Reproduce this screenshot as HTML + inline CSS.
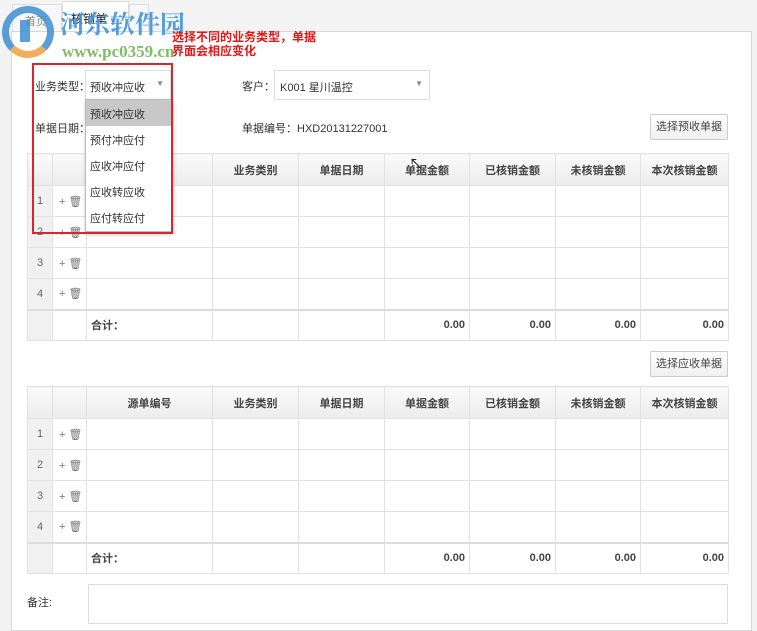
<!DOCTYPE html>
<html><head><meta charset="utf-8">
<style>
*{box-sizing:border-box;margin:0;padding:0}
body{width:757px;height:611px;overflow:hidden;background:#f2f2f2;font-family:"Liberation Sans","Noto Sans CJK SC",sans-serif;font-size:11px;color:#333;position:relative}
.abs{position:absolute}
.panel{left:11px;top:31px;width:741px;height:600px;background:#fff;border:1px solid #d8d8d8}
table{position:absolute;border-collapse:collapse;table-layout:fixed;left:27px;width:701px}
td,th{border:1px solid #e2e2e2;height:31px;padding:0 4px;font-size:11px}
th{background:linear-gradient(#fafafa,#ececec);font-weight:bold;color:#444;text-align:center;height:32px}
td.n{background:#f1f1f1;color:#666;text-align:center}
td.ic{color:#777;text-align:left;padding-left:6px;letter-spacing:3px}
tr.tot td{border-top:2px solid #ddd;font-weight:bold;text-align:right;color:#444}
tr.tot td.l{text-align:left}
.btn{border:1px solid #ccc;background:linear-gradient(#fff,#f0f0f0);width:78px;height:26px;left:650px;text-align:center;line-height:24px;color:#444;border-radius:2px}
.red{color:#e01818;font-weight:bold;font-size:12px}
</style></head><body>
<div class="abs" style="left:0;top:0;width:757px;height:31px;background:#f4f4f4"></div>
<div class="abs" style="left:12px;top:4px;width:50px;height:28px;border:1px solid #ddd;border-bottom:none;background:#f7f7f7;color:#888;padding:8px 0 0 12px">首页</div>
<div class="abs" style="left:62px;top:1px;width:67px;height:31px;border:1px solid #ddd;border-bottom:none;background:#fff;padding:8px 0 0 8px;font-size:12px;color:#222">核销单 <span style="color:#999;font-size:9px">▾</span></div>
<div class="abs" style="left:129px;top:4px;width:20px;height:28px;border:1px solid #ddd;border-bottom:none;background:#f7f7f7"></div>
<div class="abs panel"></div>
<!-- watermark logo -->
<div class="abs" style="left:2px;top:6px;width:52px;height:52px;border-radius:50%;border:7px solid #3f8fd2;border-bottom-color:#f0a040;opacity:.85"></div>
<div class="abs" style="left:20px;top:20px;width:10px;height:22px;background:#3f8fd2;opacity:.85"></div>
<div class="abs" style="left:60px;top:5px;font-size:25px;font-weight:bold;color:#3f94dc;font-family:'Liberation Serif','Noto Serif CJK SC',serif;opacity:.9">河东软件园</div>
<div class="abs" style="left:62px;top:42px;font-size:17px;font-weight:bold;color:#6ab04c;font-family:'Liberation Serif',serif;opacity:.85">www.pc0359.cn</div>
<div class="abs red" style="left:172px;top:30px;line-height:14px">选择不同的业务类型，单据<br>界面会相应变化</div>
<!-- form -->
<div class="abs" style="left:35px;top:78px">业务类型：</div>
<div class="abs" style="left:85px;top:70px;width:86px;height:30px;border:1px solid #ddd;padding:8px 0 0 4px">预收冲应收<span style="position:absolute;right:6px;top:8px;color:#888;font-size:8px">▼</span></div>
<div class="abs" style="left:35px;top:120px">单据日期：</div>
<div class="abs" style="left:242px;top:78px">客户：</div>
<div class="abs" style="left:274px;top:70px;width:156px;height:30px;border:1px solid #ddd;padding:8px 0 0 5px">K001 星川温控<span style="position:absolute;right:6px;top:8px;color:#888;font-size:8px">▼</span></div>
<div class="abs" style="left:242px;top:120px">单据编号：HXD20131227001</div>
<div class="abs btn" style="top:114px">选择预收单据</div>
<table style="top:153px">
<colgroup><col style="width:25px"><col style="width:34px"><col style="width:126px"><col style="width:86px"><col style="width:86px"><col style="width:85px"><col style="width:86px"><col style="width:85px"><col style="width:88px"></colgroup>
<tr><th></th><th></th><th>源单编号</th><th>业务类别</th><th>单据日期</th><th>单据金额</th><th>已核销金额</th><th>未核销金额</th><th>本次核销金额</th></tr>
<tr><td class="n">1</td><td class="ic">+🗑</td><td></td><td></td><td></td><td></td><td></td><td></td><td></td></tr>
<tr><td class="n">2</td><td class="ic">+🗑</td><td></td><td></td><td></td><td></td><td></td><td></td><td></td></tr>
<tr><td class="n">3</td><td class="ic">+🗑</td><td></td><td></td><td></td><td></td><td></td><td></td><td></td></tr>
<tr><td class="n">4</td><td class="ic">+🗑</td><td></td><td></td><td></td><td></td><td></td><td></td><td></td></tr>
<tr class="tot"><td class="n"></td><td></td><td class="l">合计：</td><td></td><td></td><td>0.00</td><td>0.00</td><td>0.00</td><td>0.00</td></tr>
</table>
<div class="abs btn" style="top:351px">选择应收单据</div>
<table style="top:386px">
<colgroup><col style="width:25px"><col style="width:34px"><col style="width:126px"><col style="width:86px"><col style="width:86px"><col style="width:85px"><col style="width:86px"><col style="width:85px"><col style="width:88px"></colgroup>
<tr><th></th><th></th><th>源单编号</th><th>业务类别</th><th>单据日期</th><th>单据金额</th><th>已核销金额</th><th>未核销金额</th><th>本次核销金额</th></tr>
<tr><td class="n">1</td><td class="ic">+🗑</td><td></td><td></td><td></td><td></td><td></td><td></td><td></td></tr>
<tr><td class="n">2</td><td class="ic">+🗑</td><td></td><td></td><td></td><td></td><td></td><td></td><td></td></tr>
<tr><td class="n">3</td><td class="ic">+🗑</td><td></td><td></td><td></td><td></td><td></td><td></td><td></td></tr>
<tr><td class="n">4</td><td class="ic">+🗑</td><td></td><td></td><td></td><td></td><td></td><td></td><td></td></tr>
<tr class="tot"><td class="n"></td><td></td><td class="l">合计：</td><td></td><td></td><td>0.00</td><td>0.00</td><td>0.00</td><td>0.00</td></tr>
</table>
<div class="abs" style="left:27px;top:594px">备注:</div>
<div class="abs" style="left:88px;top:584px;width:640px;height:40px;border:1px solid #ddd"></div>
<!-- dropdown -->
<div class="abs" style="left:85px;top:99px;width:87px;height:133px;background:#fff;border:1px solid #bbb;box-shadow:1px 2px 4px rgba(0,0,0,.3)">
<div style="height:26px;background:#c8c8c8;padding:6px 0 0 4px">预收冲应收</div>
<div style="height:26px;padding:6px 0 0 4px">预付冲应付</div>
<div style="height:26px;padding:6px 0 0 4px">应收冲应付</div>
<div style="height:26px;padding:6px 0 0 4px">应收转应收</div>
<div style="height:26px;padding:6px 0 0 4px">应付转应付</div>
</div>
<div class="abs" style="left:32px;top:63px;width:141px;height:171px;border:2px solid #d9262e"></div>
<div class="abs" style="left:409px;top:154px;font-size:14px;color:#222">↖</div>
</body></html>
